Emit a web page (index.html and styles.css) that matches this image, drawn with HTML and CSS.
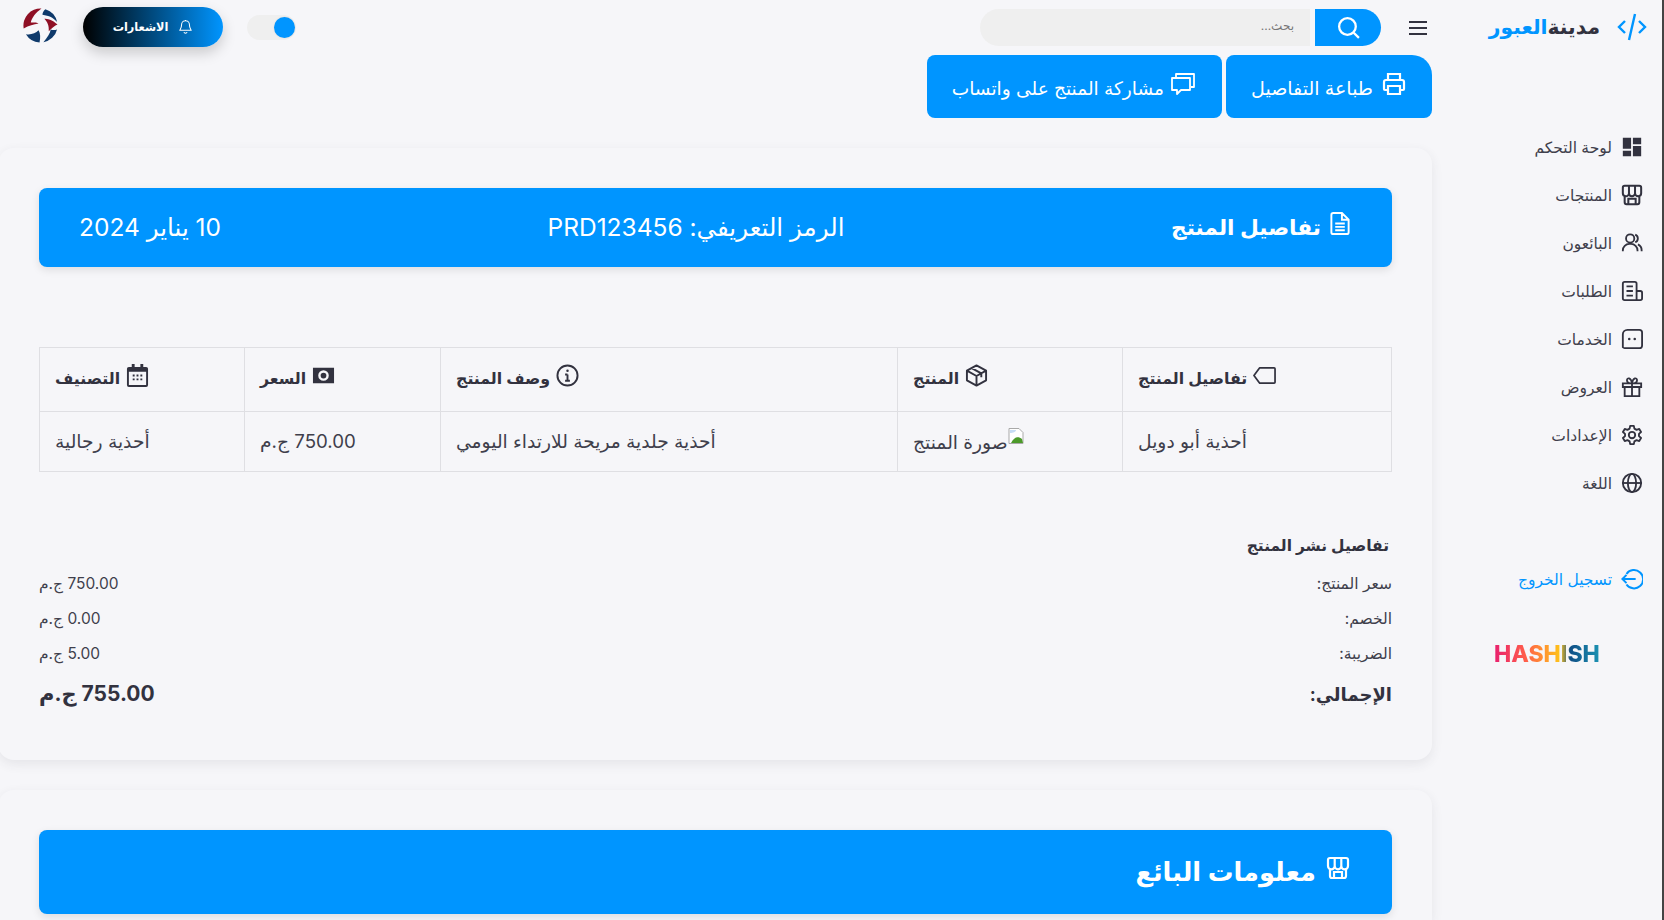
FILE: index.html
```html
<!DOCTYPE html>
<html lang="ar" dir="rtl">
<head>
<meta charset="utf-8">
<title>تفاصيل المنتج</title>
<link rel="stylesheet" href="styles.css">
</head>
<body>
<div class="app">
  <aside class="sidebar">
    <div class="brand">
      <svg class="brand-icon" viewBox="0 0 30 28" fill="none" stroke="#0095ff" stroke-width="2.400"><path d="M8 8 2 14l6 6M22 8l6 6-6 6M18 1l-6 26"/></svg>
      <span class="brand-name">مدينة<span class="brand-accent">العبور</span></span>
    </div>
    <nav class="nav">
      <a class="nav-item"><svg class="nav-icon" viewBox="0 0 24 24" fill="currentColor"><path d="M2 2h9v12H2zM13 2h9v7h-9zM13 11h9v11h-9zM2 16h9v6H2z"/></svg>لوحة التحكم</a>
      <a class="nav-item"><svg class="nav-icon" viewBox="0 0 24 24" fill="none" stroke="currentColor" stroke-width="2.200"><path d="M4 13v7a2 2 0 0 0 2 2h12a2 2 0 0 0 2-2v-7M4 2h16a2 2 0 0 1 2 2v6a3.300 3.300 0 0 1-6.700 0 3.300 3.300 0 0 1-6.600 0A3.300 3.300 0 0 1 2 10V4a2 2 0 0 1 2-2zM8.700 2v8M15.300 2v8M8 22v-6h8v6"/></svg>المنتجات</a>
      <a class="nav-item"><svg class="nav-icon" viewBox="0 0 24 24" fill="none" stroke="currentColor" stroke-width="2"><circle cx="10" cy="7" r="4.500"/><path d="M2 21v-1a7 7 0 0 1 7-7h2a7 7 0 0 1 7 7v1M15.500 2.800a4.500 4.500 0 0 1 0 8.400M18.500 13.500A7 7 0 0 1 22.500 20v1"/></svg>البائعون</a>
      <a class="nav-item"><svg class="nav-icon" viewBox="0 0 24 24" fill="none" stroke="currentColor" stroke-width="2"><path d="M17 12V4a2 2 0 0 0-2-2H4a2 2 0 0 0-2 2v16a2 2 0 0 0 2 2h17a2 2 0 0 0 2-2v-6a2 2 0 0 0-2-2zM17 12v10M6 7h7M6 12h7M6 17h7"/></svg>الطلبات</a>
      <a class="nav-item"><svg class="nav-icon" viewBox="0 0 24 24" fill="none" stroke="currentColor" stroke-width="2"><path d="M7 2h13a3 3 0 0 1 3 3v14a3 3 0 0 1-3 3H4a3 3 0 0 1-2-1V7a5 5 0 0 1 5-5z"/><circle cx="9" cy="12" r="1.400" fill="currentColor" stroke="none"/><circle cx="15" cy="12" r="1.400" fill="currentColor" stroke="none"/></svg>الخدمات</a>
      <a class="nav-item"><svg class="nav-icon" viewBox="0 0 24 24" fill="none" stroke="currentColor" stroke-width="2"><path d="M2 8h20v4H2zM4 12v10h16V12M12 8v14M12 8C9 8 6.500 7 6.500 4.500 6.500 1.500 11 1.500 12 8zM12 8c3 0 5.500-1 5.500-3.500C17.500 1.500 13 1.500 12 8z"/></svg>العروض</a>
      <a class="nav-item"><svg class="nav-icon" viewBox="0 0 24 24" fill="none" stroke="currentColor" stroke-width="2"><circle cx="12" cy="12" r="3.500"/><path d="M10 2h4l.6 3 2.400 1.400 2.900-1 2 3.400-2.300 2v2.400l2.300 2-2 3.400-2.900-1L14.600 19l-.6 3h-4l-.6-3L7 17.600l-2.900 1-2-3.400 2.300-2v-2.400l-2.300-2 2-3.400 2.900 1L9.400 5z" stroke-linejoin="round"/></svg>الإعدادات</a>
      <a class="nav-item"><svg class="nav-icon" viewBox="0 0 24 24" fill="none" stroke="currentColor" stroke-width="2"><circle cx="12" cy="12" r="10"/><path d="M2 12h20"/><ellipse cx="12" cy="12" rx="4.500" ry="10"/></svg>اللغة</a>
      <a class="nav-item nav-logout"><svg class="nav-icon" viewBox="0 0 24 24" fill="none" stroke="currentColor" stroke-width="2.200"><path d="M6 6.500A10 10 0 1 1 6 18M1.500 12H16M6 7.500 1.500 12 6 16.500"/></svg>تسجيل الخروج</a>
    </nav>
    <div class="hashish">HASHISH</div>
  </aside>

  <main class="main">
    <header class="topbar">
      <div class="topbar-start">
        <svg class="menu-icon" viewBox="0 0 20 16" fill="none" stroke="currentColor" stroke-width="2"><path d="M1 2h18M1 8h18M1 14h18"/></svg>
        <div class="search">
          <button class="search-btn"><svg viewBox="0 0 24 24" fill="none" stroke="#fff" stroke-width="2.200"><circle cx="11" cy="11" r="8"/><path d="m17 17 5 5"/></svg></button>
          <div class="search-input">بحث...</div>
        </div>
      </div>
      <div class="topbar-end">
        <div class="toggle"><span class="knob"></span></div>
        <button class="notify"><svg viewBox="0 0 16 16" fill="none" stroke="#fff" stroke-width="1.100"><path d="M8 1.800a4.200 4.200 0 0 0-4.200 4.200c0 3.700-1.600 5.200-1.800 6h12c-.2-.8-1.800-2.300-1.800-6A4.200 4.200 0 0 0 8 1.800zM6.300 14a1.800 1.800 0 0 0 3.400 0M8 1v1"/></svg>الاشعارات</button>
        <svg class="avatar" viewBox="-18 -18 36 36">
          <path fill="#8f1025" d="M-17.300 3A17.500 17.500 0 0 1 1-17.500C-5-13-9-8-10-3-6-3-3-3-2-2-7-1-12 0-17.300 3z"/>
          <path fill="#0f3a6b" d="M5-16.800A17.500 17.500 0 0 1 17.100-3.500C13-8 9-10 2-11 2-13 3-15 5-16.800z"/>
          <path fill="#8f1025" d="M17.500-1C12-6 7-7 4-7 7-4 9 0 8.500 6 11 3 15 0 17.500-1z"/>
          <path fill="#0f3a6b" d="M17 4A17.500 17.500 0 0 1 3 17.200C7 12 10 8 10.500 4 12 5 15 5 17 4z"/>
          <path fill="#0f3a6b" d="M-1 17.500A17.500 17.500 0 0 1-15 9C-10 10-5 8-2 5 0 8 0 13-1 17.500z"/>
        </svg>
      </div>
    </header>

    <div class="actions">
      <button class="btn btn-print"><svg viewBox="0 0 24 24" fill="none" stroke="#fff" stroke-width="2.200"><path d="M6 8V2h12v6M6 18H3a1 1 0 0 1-1-1v-7a2 2 0 0 1 2-2h16a2 2 0 0 1 2 2v7a1 1 0 0 1-1 1h-3M6 14h12v8H6z"/></svg>طباعة التفاصيل</button>
      <button class="btn btn-share"><svg viewBox="0 0 24 24" fill="none" stroke="#fff" stroke-width="1.800"><path d="M5 5V2h18v13h-3M1 6h18v12h-9l-4 4v-4H1z" stroke-linejoin="round"/></svg>مشاركة المنتج على واتساب</button>
    </div>

    <section class="card">
      <div class="card-head">
        <h2 class="head-title"><svg viewBox="0 0 20 24" fill="none" stroke="#fff" stroke-width="2"><path d="M12 1H3a2 2 0 0 0-2 2v18a2 2 0 0 0 2 2h14a2 2 0 0 0 2-2V8zM12 1v7h7M5 12h10M5 15.500h10M5 19h10"/></svg>تفاصيل المنتج</h2>
        <span>الرمز التعريفي: PRD123456</span>
        <span>10 يناير 2024</span>
      </div>
      <table class="table">
        <colgroup><col class="c1"><col class="c2"><col class="c3"><col class="c4"><col class="c5"></colgroup>
        <thead>
          <tr>
            <th><svg viewBox="0 0 24 18" fill="none" stroke="currentColor" stroke-width="1.800"><path d="M7 1h15a1 1 0 0 1 1 1v14a1 1 0 0 1-1 1H7L1 9z" stroke-linejoin="round"/></svg>تفاصيل المنتج</th>
            <th><svg viewBox="0 0 24 24" fill="none" stroke="currentColor" stroke-width="2"><path d="M12 1.500 22 7v10l-10 5.500L2 17V7zM2 7l10 5.500L22 7M12 12.500v10M7 4.300l10 5.500v4" stroke-linejoin="round"/></svg>المنتج</th>
            <th><svg viewBox="0 0 24 24" fill="none" stroke="currentColor" stroke-width="2"><circle cx="12" cy="12" r="10.500"/><path d="M12 11v6.500M9.500 11H12M9.500 17.500h5"/><circle cx="12" cy="7" r="1.300" fill="currentColor" stroke="none"/></svg>وصف المنتج</th>
            <th><svg viewBox="0 0 24 18" fill="currentColor"><path fill-rule="evenodd" d="M1 1h22v16H1zM12 3.500a5.500 5.500 0 1 0 0 11 5.500 5.500 0 0 0 0-11zM12 6a3 3 0 1 1 0 6 3 3 0 0 1 0-6z"/></svg>السعر</th>
            <th><svg viewBox="0 0 24 24" fill="currentColor"><path fill-rule="evenodd" d="M6 0h3v3h6V0h3v3h3a2 2 0 0 1 2 2v17a2 2 0 0 1-2 2H3a2 2 0 0 1-2-2V5a2 2 0 0 1 2-2h3zM3 8v14h18V8zM7 11h2v2H7zM11 11h2v2h-2zM15 11h2v2h-2zM7 15h2v2H7zM11 15h2v2h-2zM15 15h2v2h-2z"/></svg>التصنيف</th>
          </tr>
        </thead>
        <tbody>
          <tr>
            <td>أحذية أبو دويل</td>
            <td><svg class="broken" viewBox="0 0 16 16"><path d="M1 .5h10l4 4v11H1z" fill="#fff" stroke="#a9a9a9"/><path d="M3 15c3-6 7-7 11-4l1 4z" fill="#4c9a2a"/><path d="M2 2h6c0 2-3 3-6 3z" fill="#c6dcf5"/></svg>صورة المنتج</td>
            <td>أحذية جلدية مريحة للارتداء اليومي</td>
            <td>750.00 ج.م</td>
            <td>أحذية رجالية</td>
          </tr>
        </tbody>
      </table>
      <div class="summary">
        <h3 class="summary-title">تفاصيل نشر المنتج</h3>
        <div class="summary-row"><span>سعر المنتج:</span><span>750.00 ج.م</span></div>
        <div class="summary-row"><span>الخصم:</span><span>0.00 ج.م</span></div>
        <div class="summary-row"><span>الضريبة:</span><span>5.00 ج.م</span></div>
        <div class="summary-row summary-total"><span class="total-label">الإجمالي:</span><span>755.00 ج.م</span></div>
      </div>
    </section>

    <section class="card card-second">
      <div class="card-head card-head-lg">
        <h2 class="head-title"><svg viewBox="0 0 24 24" fill="none" stroke="#fff" stroke-width="2.200"><path d="M4 13v7a2 2 0 0 0 2 2h12a2 2 0 0 0 2-2v-7M4 2h16a2 2 0 0 1 2 2v6a3.300 3.300 0 0 1-6.700 0 3.300 3.300 0 0 1-6.600 0A3.300 3.300 0 0 1 2 10V4a2 2 0 0 1 2-2zM8.700 2v8M15.300 2v8M8 22v-6h8v6"/></svg>معلومات البائع</h2>
      </div>
    </section>
  </main>
</div>
</body>
</html>
```

FILE: styles.css
```css
* { box-sizing: border-box; }
html, body { margin: 0; height: 100%; overflow: hidden; }
body {
  background: #f6f6f9;
  color: #32323f;
  font-family: Inter, "Noto Sans", "DejaVu Sans", sans-serif;
  font-size: 16px;
}
button { font-family: inherit; border: 0; cursor: pointer; }
h2, h3 { margin: 0; }

.app {
  display: flex;
  height: 920px;
  border-right: 2px solid #444;
}

/* sidebar */
.sidebar {
  flex: 0 0 230px;
  padding: 12px 19px 0 0;
}
.brand { display: flex; align-items: center; gap: 17px; height: 30px; margin-right: -4px; }
.brand-icon { width: 30px; height: 28px; }
.brand-name { font-size: 20.300px; font-weight: 600; line-height: 30px; }
.brand-accent { color: #0095ff; }
.nav { display: flex; flex-direction: column; margin-top: 81px; }
.nav-item {
  display: flex; align-items: center; gap: 9px;
  height: 48px; font-size: 15.500px; color: #3f3f4c;
}
.nav-icon { width: 22px; height: 22px; color: #32323f; flex: none; }
.nav-logout { color: #0095ff; margin-top: 48px; }
.nav-logout .nav-icon { color: #0095ff; }
.hashish {
  width: 106px;
  margin: 37px 43px 0 0;
  font-family: Inter, sans-serif;
  font-weight: 800;
  font-size: 23px;
  line-height: 28px;
  direction: ltr;
  background: linear-gradient(90deg, #e9206f 0%, #ff5e4a 30%, #ffc21a 62%, #0f4f86 72%, #1c93b3 100%);
  -webkit-background-clip: text;
  background-clip: text;
  color: transparent;
}

/* main */
.main { flex: 0 0 1432px; }
.topbar {
  display: flex; justify-content: space-between; align-items: center;
  height: 55px; padding: 0 4px 0 25px;
}
.topbar-start { display: flex; align-items: center; gap: 27px; }
.menu-icon { width: 20px; height: 16px; color: #32323f; margin-top: 1px; }
.search { display: flex; gap: 5px; height: 37px; }
.search-btn {
  width: 66px; height: 37px; background: #0095ff;
  border-radius: 0 20px 20px 0; padding: 0;
  display: flex; align-items: center; justify-content: center;
}
.search-btn svg { width: 25px; height: 25px; }
.search-input {
  width: 330px; height: 37px; background: #efefef;
  border-radius: 20px 0 0 20px;
  padding: 0 16px; color: #777; font-size: 12px; line-height: 34px;
}
.topbar-end { display: flex; align-items: center; gap: 24px; }
.toggle {
  width: 49px; height: 25px; background: #efefef; border-radius: 13px;
  display: flex; align-items: center; padding: 0 1px;
  direction: ltr; justify-content: flex-end;
}
.knob { width: 21px; height: 21px; border-radius: 50%; background: #0095ff; box-shadow: 0 0 2px rgba(0,0,0,.1); }
.notify {
  width: 140px; height: 40px; border-radius: 20px; margin-top: -2px; margin-left: 1px;
  background: linear-gradient(90deg, #000, #0095ff);
  color: #fff; font-size: 11.300px; font-weight: 600;
  display: flex; align-items: center; justify-content: center; gap: 10px;
  box-shadow: 0 6px 14px rgba(0,0,0,.18);
}
.notify svg { width: 15px; height: 15px; }
.avatar { width: 35px; height: 35px; display: block; margin-top: -4px; }

/* action buttons */
.actions { display: flex; gap: 4px; height: 63px; }
.btn {
  display: flex; align-items: center; gap: 9px;
  background: #0095ff; color: #fff;
  height: 63px; padding: 3px 26px 0 25px;
  border-radius: 8px;
}
.btn svg { width: 24px; height: 24px; margin-bottom: 8px; }
.btn-print { font-size: 19px; border-top-right-radius: 20px; }
.btn-share { font-size: 18.600px; gap: 7px; padding-right: 27px; }

/* cards */
.card {
  margin-top: 30px;
  padding: 40px 40px 40px 41px;
  height: 612px;
  border-radius: 16px;
  background: #f6f6f9;
  box-shadow: 0 4px 12px rgba(50, 50, 70, .09);
}
.card-second { height: 130px; border-radius: 16px 16px 0 0; }
.card-head {
  display: flex; justify-content: space-between; align-items: center;
  height: 79px; padding: 0 42px 2px 40px;
  background: #0095ff; color: #fff; border-radius: 8px;
  font-size: 24.500px;
  box-shadow: 0 3px 8px rgba(0,0,0,.1);
}
.card-head-lg { height: 84px; }
.card-head-lg .head-title { font-size: 25.700px; gap: 10px; }
.head-title { font-size: 21.700px; font-weight: 600; display: flex; align-items: center; gap: 9px; }
.head-title svg { width: 20px; height: 23px; margin-bottom: 6px; }
.card-head-lg .head-title svg { width: 24px; height: 24px; }

/* table */
.table {
  width: 1352px; margin-top: 80px;
  border-collapse: collapse; table-layout: fixed;
  font-size: 18.700px; color: #3f3f4c;
}
.c1 { width: 269px; } .c2 { width: 225px; } .c3 { width: 457px; } .c4 { width: 196px; } .c5 { width: 205px; }
.table th, .table td { border: 1px solid #dfdfe3; padding: 0 15px; text-align: left; }
.table th { height: 64px; font-size: 15.800px; font-weight: 600; color: #32323f; }
.table td { height: 60px; padding-bottom: 1px; }
.table th svg { width: 23px; height: 23px; margin-left: 6px; margin-bottom: 8px; vertical-align: middle; }
.broken { width: 16px; height: 16px; vertical-align: 5px; }

/* summary */
.summary { margin-top: 62px; }
.summary-title { font-size: 15.500px; font-weight: 600; padding-right: 3px; height: 24px; line-height: 24px; color: #32323f; }
.summary-row {
  display: flex; justify-content: space-between;
  font-size: 15.500px; color: #3f3f4c; height: 35px; line-height: 35px;
}
.summary-title + .summary-row { margin-top: 8px; }
.summary-total {
  font-size: 21px; font-weight: 700; color: #32323f;
  height: 40px; line-height: 40px; margin-top: 3px;
}
.total-label { font-size: 18px; margin-top: 1px; }
```
